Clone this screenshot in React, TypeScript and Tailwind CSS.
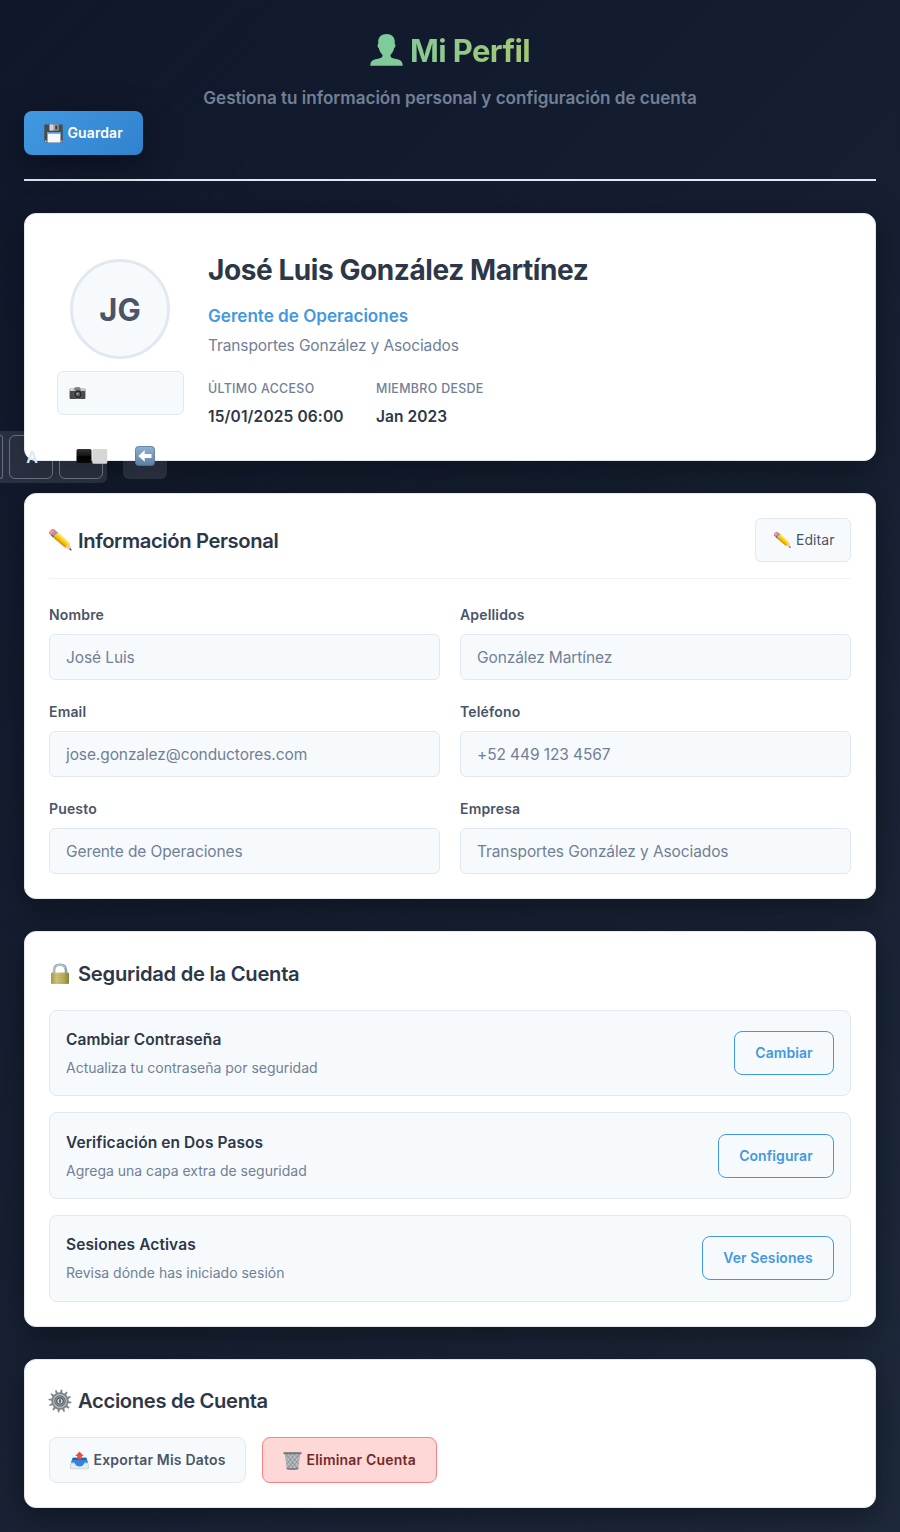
import type { ReactNode } from 'react';

function UserIcon() {
  return (
    <svg viewBox="0 0 33 33" className="h-[33px] w-[33px] shrink-0">
      <defs>
        <linearGradient id="user" x1="0" y1="0" x2="1" y2="1">
          <stop offset="0" stopColor="#7ccb9f" />
          <stop offset="1" stopColor="#83ca97" />
        </linearGradient>
      </defs>
      <path fill="url(#user)" d="M16.500 0C21.500 0 24.800 2.900 24.800 7.700L24.700 9.900C26 10.300 25.500 13.300 24.100 14.200C23.500 17.500 21.800 19.300 20.400 21C20.300 23.100 21.200 23.900 24 24.500L28.500 25.500C31.500 26.400 32.700 28.500 32.700 31.800H0.300C0.300 28.500 1.500 26.400 4.500 25.500L9 24.500C11.800 23.900 12.700 23.100 12.600 21C11.200 19.300 9.500 17.500 8.900 14.200C7.500 13.300 7 10.300 8.300 9.900L8.200 7.700C8.200 2.900 11.500 0 16.500 0Z" />
    </svg>
  );
}

function FloppyIcon() {
  return (
    <svg viewBox="0 0 19 19" className="h-[19px] w-[19px] shrink-0">
      <path fill="#4a4b4e" d="M.3 1.200Q.3.500 1 .5H18Q18.700.5 18.700 1.200V18.500H1.400L.3 17.400Z" />
      <path fill="#a9a9a9" d="M5.200.5H14.600V6.500H5.200Z" />
      <path fill="#d4d4d4" d="M6 .5H9.200V6.500H6Z" />
      <path fill="#3c3d40" d="M11.200 1.500H13.400V5.500H11.200Z" />
      <path fill="#f6f7f9" d="M3.500 8H16.500V18.500H3.500Z" />
      <path fill="#5a93dc" d="M3.500 8H16.500V9.700H3.500Z" />
      <path fill="#c9cdd2" d="M1 16.500H2.500V18H1ZM17.200 16.500H18.300V18H17.200Z" />
    </svg>
  );
}

function PencilIcon({ className }: { className: string }) {
  return (
    <svg viewBox="0 0 24 24" className={className}>
      <path fill="#e9697b" d="M1.200 5.600Q.4 4.100 2.600 2.200Q4.900.4 6.400 1.500L8.200 3.200L3.200 7.600Z" />
      <path fill="#f6a6ac" d="M1.700 4.700Q2.300 2.500 5 1.700L6.300 3L3 6Z" />
      <path fill="#8fa2b4" d="M3.100 7.600L8.200 3.100L10.300 4.800L5.100 9.600Z" />
      <path fill="#50606f" d="M3.100 7.600L4.200 6.600L6.200 8.600L5.100 9.600Z" />
      <path fill="#f8c70d" d="M5.100 9.600L10.300 4.800L21.500 15.300L17.200 19.700Z" />
      <path fill="#e39a06" d="M5.100 9.600L6.700 8.100L18.600 18.200L17.200 19.700Z" />
      <path fill="#ffe257" d="M8.800 6.200L10.300 4.800L21.500 15.300L20.200 16.600Z" />
      <path fill="#eccb9a" d="M17.200 19.700L21.500 15.300L23.500 22.600Z" />
      <path fill="#35322f" d="M21.200 21.500L22.800 20.300L23.600 22.800Z" />
    </svg>
  );
}

function LockIcon() {
  return (
    <svg viewBox="0 0 24 24" className="h-6 w-6 shrink-0">
      <defs>
        <linearGradient id="lock" x1="0" y1="0" x2="1" y2="0">
          <stop offset="0" stopColor="#a59a4b" />
          <stop offset=".3" stopColor="#d2c878" />
          <stop offset=".7" stopColor="#b9ae5c" />
          <stop offset="1" stopColor="#8b8137" />
        </linearGradient>
      </defs>
      <path fill="none" stroke="#8ea0b2" strokeWidth="2.600" d="M6 12.500V8.500Q6 2.700 12 2.700Q18 2.700 18 8.500V12.500" />
      <path fill="none" stroke="#ccd8e2" strokeWidth="1" d="M5.700 11V8.500Q6 3.200 12 2.800Q16 2.800 17.300 6" />
      <rect x="3" y="10.500" width="18" height="11.500" rx="1.200" fill="url(#lock)" />
      <path stroke="#8d8341" strokeWidth=".7" opacity=".35" d="M3.500 13H20.500M3.500 15.500H20.500M3.500 18H20.500M3.500 20.500H20.500" />
    </svg>
  );
}

const teeth = [0, 30, 60, 90, 120, 150, 180, 210, 240, 270, 300, 330];

function GearIcon() {
  return (
    <svg viewBox="0 0 24 24" className="h-6 w-6 shrink-0">
      {teeth.map((angle) => (
        <path key={angle} fill="#7b8389" d="M10.800 4L11.300.5H12.700L13.200 4Z" transform={`rotate(${angle + 8} 12 12)`} />
      ))}
      <circle cx="12" cy="12" r="7.800" fill="#b9bec2" stroke="#7d858b" strokeWidth="1.800" />
      <circle cx="12" cy="12" r="5.200" fill="#a3aab0" stroke="#686f76" strokeWidth="1.200" />
      <circle cx="12" cy="12" r="3.200" fill="#d9dde0" stroke="#495158" strokeWidth="1.200" />
      <path fill="#343a40" d="M11.300 10.300H12.800V13.700H11.300Z" />
    </svg>
  );
}

function CameraIcon() {
  return (
    <svg viewBox="0 0 17 13" className="h-[13px] w-[17px] shrink-0">
      <path fill="#4a4a48" d="M.6 2.500Q.6 1.700 1.400 1.700H5L6.200.5H10.700L11.800 1.700H15.600Q16.400 1.700 16.400 2.500V11Q16.400 11.900 15.600 11.900H1.400Q.6 11.900.6 11Z" />
      <path fill="#c9c7bd" d="M.6 2.500Q.6 1.700 1.400 1.700H15.600Q16.400 1.700 16.400 2.500V4H.6Z" />
      <path fill="#85837b" d="M6.200.5H10.700L11.800 3.200H5Z" />
      <path fill="#e9e6cc" d="M1.600 2H4V3.400H1.600Z" />
      <circle cx="9" cy="7.300" r="4.300" fill="#26282a" stroke="#6f6f6b" strokeWidth=".8" />
      <circle cx="9" cy="7.300" r="2.200" fill="#5b666d" />
      <circle cx="8.300" cy="6.500" r=".8" fill="#b8c6cd" />
    </svg>
  );
}

function OutboxIcon() {
  return (
    <svg viewBox="0 0 19 19" className="h-[19px] w-[19px] shrink-0">
      <path fill="#c8cdd2" d="M3 8H16L18.600 13V17.300Q18.600 18 18 18H1Q.4 18 .4 17.300V13Z" />
      <path fill="#e9ebec" d="M.4 12.800H18.600V17.300Q18.600 18 18 18H1Q.4 18 .4 17.300Z" />
      <path fill="none" stroke="#c5cacd" strokeWidth=".6" d="M.6 12.800V17.200Q.6 17.800 1.200 17.800H17.800Q18.400 17.800 18.400 17.200V12.800" />
      <path fill="#2f86dc" d="M2.700 6.800H16.300L18.200 11.600H14.500Q13.500 15.600 9.500 15.600Q5.500 15.600 4.500 11.600H.8Z" />
      <path fill="#1c5fae" d="M2.900 6.800H16.100L16.700 8.800H2.300Z" />
      <path fill="#f24b45" d="M9.500.4L13.800 5H11.800V8H7.200V5H5.200Z" />
    </svg>
  );
}

function TrashIcon() {
  return (
    <svg viewBox="0 0 19 19" className="h-[19px] w-[19px] shrink-0">
      <path fill="#a2a8ac" d="M1.800 2.500H17.200L15.200 18.100Q9.500 19.200 3.800 18.100Z" />
      <path stroke="#d3d7d9" strokeWidth=".6" fill="none" d="M3 6L13 18M5 3L15 15M9 3L16 11M2.800 9L10 18M16 6L6 18M14 3L4 15M10 3L3 11M16 10L10 18" />
      <path stroke="#7f868a" strokeWidth=".5" fill="none" d="M4 4L14 17M7 3L15.500 13M3.300 8L11 18M15 5L5 17M12 3L3.600 13M15.500 9L8 18" />
      <path fill="#70777c" d="M.5 1.200H18.500V3.200H.5Z" />
      <path fill="#6f767a" d="M3.600 16.700Q9.500 17.800 15.400 16.700L15.200 18.200Q9.500 19.300 3.800 18.200Z" />
    </svg>
  );
}

function ContrastIcon() {
  return (
    <svg viewBox="0 0 32 16" className="h-4 w-8 shrink-0">
      <defs>
        <linearGradient id="black" x1="0" y1="0" x2="0" y2="1">
          <stop offset="0" stopColor="#353535" />
          <stop offset=".5" stopColor="#111111" />
          <stop offset=".55" stopColor="#000000" />
          <stop offset="1" stopColor="#0a0a0a" />
        </linearGradient>
      </defs>
      <rect x=".5" y="1" width="15" height="14" rx="1.500" fill="url(#black)" />
      <rect x="16.300" y="1" width="15" height="14.800" rx="1.500" fill="#d6d6d6" />
    </svg>
  );
}

function BackIcon() {
  return (
    <svg viewBox="0 0 20 20" className="h-5 w-5 shrink-0">
      <defs>
        <linearGradient id="back" x1="0" y1="0" x2="0" y2="1">
          <stop offset="0" stopColor="#8fb3d3" />
          <stop offset="1" stopColor="#5c7d9e" />
        </linearGradient>
      </defs>
      <rect x=".5" y=".5" width="19" height="19" rx="3" fill="url(#back)" stroke="#55748f" strokeWidth=".8" />
      <path fill="#ffffff" d="M3.300 10L9.700 4.300V7.900H16.500V12.100H9.700V15.700Z" />
    </svg>
  );
}

function Card({ className, children }: { className: string; children: ReactNode }) {
  return (
    <section className={`rounded-xl border border-[#e2e8f0] bg-white shadow-[0_8px_32px_rgba(0,0,0,0.4)] ${className}`}>
      {children}
    </section>
  );
}

function CardTitle({ icon, tracking, children }: { icon: ReactNode; tracking: string; children: ReactNode }) {
  return (
    <h3 className={`-ml-px flex h-[33px] items-center gap-[6px] text-[20.2px] font-semibold text-[#2d3748] ${tracking}`}>
      {icon}
      <span className="pt-[2px]">{children}</span>
    </h3>
  );
}

const fields = [
  { label: 'Nombre', value: 'José Luis' },
  { label: 'Apellidos', value: 'González Martínez' },
  { label: 'Email', value: 'jose.gonzalez@conductores.com' },
  { label: 'Teléfono', value: '+52 449 123 4567' },
  { label: 'Puesto', value: 'Gerente de Operaciones' },
  { label: 'Empresa', value: 'Transportes González y Asociados' },
];

const securityItems = [
  { title: 'Cambiar Contraseña', text: 'Actualiza tu contraseña por seguridad', action: 'Cambiar', width: 'w-[100px]' },
  { title: 'Verificación en Dos Pasos', text: 'Agrega una capa extra de seguridad', action: 'Configurar', width: 'w-[116px]' },
  { title: 'Sesiones Activas', text: 'Revisa dónde has iniciado sesión', action: 'Ver Sesiones', width: 'w-[132px]' },
];

function FloatingTools() {
  return (
    <div className="absolute top-[431px] left-0 flex h-[52px] items-center gap-4">
      <div className="flex h-[52px] w-[107px] items-center gap-1.5 rounded-r-md bg-white/10">
        <div className="h-11 w-[3px] rounded-r-md border border-l-0 border-white/30" />
        <button className="flex h-11 w-11 items-center justify-center rounded-md border border-white/30 pl-0.5 text-base font-semibold text-[#e2e8f0]">A</button>
        <button className="flex h-11 w-11 items-center justify-start rounded-md border border-white/30 pb-0.5 pl-4">
          <ContrastIcon />
        </button>
      </div>
      <button className="flex h-11 w-11 items-center justify-center rounded-md bg-white/10 pb-0.5">
        <BackIcon />
      </button>
    </div>
  );
}

export default function App() {
  return (
    <div className="relative min-h-[1532px] overflow-hidden bg-[linear-gradient(135deg,#0f172a_0%,#1e293b_100%)] px-6 pb-6 font-['Inter',sans-serif]">
      <header className="h-[181px] border-b-2 border-[#e2e8f0] pt-[25px]">
        <h1 className="flex h-[51px] items-center justify-center gap-[7px] text-[31px] font-bold tracking-[-0.6px]">
          <UserIcon />
          <span className="bg-linear-to-r from-[#86ca94] to-[#a5c774] bg-clip-text pt-[2px] text-transparent">Mi Perfil</span>
        </h1>
        <p className="mt-2 h-[27px] text-center text-[17.1px] leading-[28px] font-semibold tracking-[-0.01px] text-[#718096]">
          Gestiona tu información personal y configuración de cuenta
        </p>
        <button className="flex h-11 w-[119px] items-center gap-[5px] rounded-lg bg-linear-135 from-[#4299e1] to-[#3182ce] pl-[19.500px] text-[14px] font-semibold tracking-[0.1px] text-white shadow-[0_8px_32px_rgba(0,0,0,0.4)]">
          <FloppyIcon />
          <span className="pb-px">Guardar</span>
        </button>
      </header>

      <main className="mt-8 flex flex-col gap-8">
        <Card className="flex h-[248px] items-center gap-6 px-8">
          <div className="flex w-[127px] shrink-0 flex-col gap-3">
            <div className="ml-[13px] flex h-[100px] w-[100px] items-center justify-center rounded-full border-3 border-[#e2e8f0] bg-[#f7fafc] pt-[2px] text-[31px] font-bold text-[#4a5568]">
              JG
            </div>
            <button className="flex h-11 w-full items-center gap-1 rounded-md border border-[#e2e8f0] bg-[#f7fafc] pl-[11px] text-[12.8px] font-semibold text-[#f8f9fa]">
              <CameraIcon />
              Cambiar Foto
            </button>
          </div>
          <div>
            <h2 className="h-12 text-[28px] leading-[48px] font-bold tracking-[-0.42px] text-[#2d3748]">José Luis González Martínez</h2>
            <p className="mt-2 h-7 text-[17.1px] leading-[28px] font-semibold tracking-[-0.01px] text-[#4299e1]">Gerente de Operaciones</p>
            <p className="mt-0.5 h-[26px] text-[15.5px] leading-[28px] tracking-[-0.12px] text-[#718096]">Transportes González y Asociados</p>
            <dl className="mt-5 flex gap-8">
              <div className="w-[136px]">
                <dt className="h-[21px] text-[12.4px] leading-[21px] font-medium tracking-[0.34px] text-[#718096]">ÚLTIMO ACCESO</dt>
                <dd className="mt-1 h-[25px] text-[15.5px] leading-[28px] font-semibold tracking-[0.13px] whitespace-nowrap text-[#2d3748]">15/01/2025 06:00</dd>
              </div>
              <div>
                <dt className="h-[21px] text-[12.4px] leading-[21px] font-medium tracking-[0.34px] text-[#718096]">MIEMBRO DESDE</dt>
                <dd className="mt-1 h-[25px] text-[15.5px] leading-[28px] font-semibold tracking-[0.07px] text-[#2d3748]">Jan 2023</dd>
              </div>
            </dl>
          </div>
        </Card>

        <Card className="h-[406px] p-6">
          <div className="flex items-center justify-between border-b border-[#edf2f7] pb-4">
            <CardTitle tracking="tracking-[-0.37px]" icon={<PencilIcon className="h-6 w-6 shrink-0" />}>Información Personal</CardTitle>
            <button className="flex h-11 w-24 items-center gap-[5px] rounded-md border border-[#e2e8f0] bg-[#f7fafc] pl-[17px] text-[14px] tracking-[0.06px] text-[#4a5568]">
              <PencilIcon className="h-[18px] w-[18px] shrink-0" />
              <span className="pb-[2px]">Editar</span>
            </button>
          </div>
          <div className="mt-6 grid grid-cols-2 gap-5">
            {fields.map((field) => (
              <label key={field.label} className="flex flex-col gap-2">
                <span className="h-[23px] text-[14px] leading-[24px] font-semibold tracking-[0.16px] text-[#4a5568]">{field.label}</span>
                <span className="flex h-[46px] items-center rounded-md border border-[#e2e8f0] bg-[#f7fafc] px-4 pt-[2px] text-[15.5px] tracking-[-0.1px] text-[#718096]">{field.value}</span>
              </label>
            ))}
          </div>
        </Card>

        <Card className="h-[396px] p-6">
          <div className="pt-px">
            <CardTitle tracking="tracking-[-0.27px]" icon={<LockIcon />}>Seguridad de la Cuenta</CardTitle>
          </div>
          <div className="mt-[19.600px] flex flex-col gap-4">
            {securityItems.map((item) => (
              <div key={item.title} className="flex h-[86.67px] items-center justify-between rounded-lg border border-[#e2e8f0] bg-[#f7fafc] px-4">
                <div>
                  <h4 className="text-[15.5px] leading-[26px] font-semibold tracking-[0.09px] text-[#2d3748]">{item.title}</h4>
                  <p className="mt-[3px] text-[14px] leading-[23px] tracking-[-0.01px] text-[#718096]">{item.text}</p>
                </div>
                <button className={`h-11 rounded-lg border border-[#4299e1] pb-px text-[14px] font-semibold tracking-[0.08px] text-[#4299e1] ${item.width}`}>{item.action}</button>
              </div>
            ))}
          </div>
        </Card>

        <Card className="h-[149px] p-6">
          <CardTitle tracking="tracking-[-0.34px]" icon={<GearIcon />}>Acciones de Cuenta</CardTitle>
          <div className="mt-5 flex gap-4">
            <button className="flex h-[46px] w-[197px] items-center gap-[4.500px] rounded-lg border border-[#e2e8f0] bg-[#f7fafc] pl-5 text-[14px] font-semibold tracking-[0.19px] text-[#4a5568]">
              <OutboxIcon />
              <span className="pb-[2px]">Exportar Mis Datos</span>
            </button>
            <button className="flex h-[46px] w-[175px] items-center gap-[4.500px] rounded-lg border border-[#fc8181] bg-[#fed7d7] pl-5 text-[14px] font-semibold tracking-[0.2px] text-[#742a2a]">
              <TrashIcon />
              <span className="pb-[2px]">Eliminar Cuenta</span>
            </button>
          </div>
        </Card>
      </main>

      <FloatingTools />
    </div>
  );
}
